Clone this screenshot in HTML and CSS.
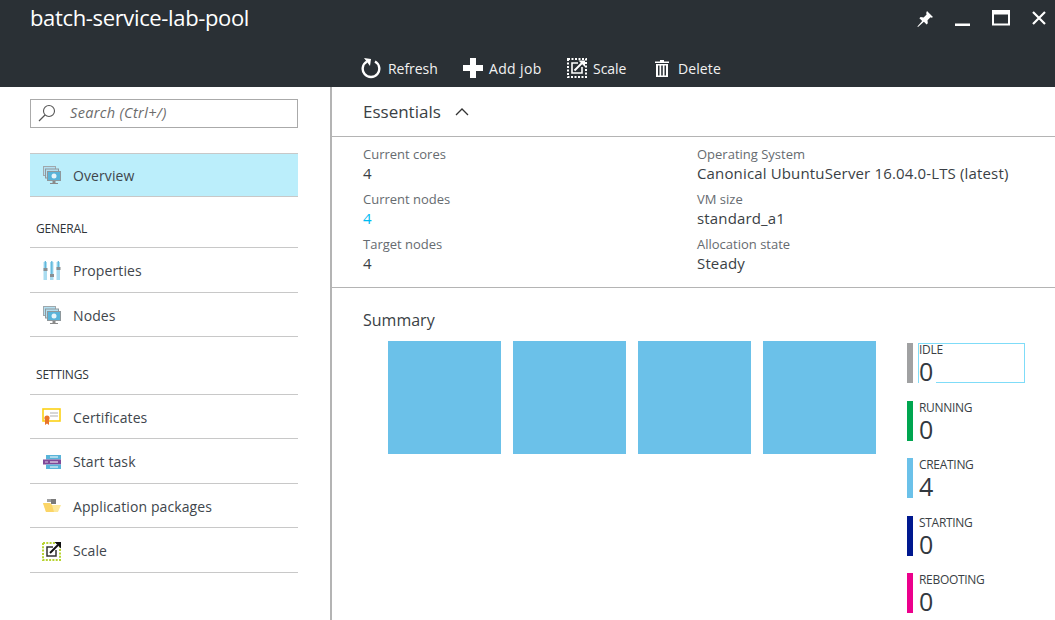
FILE: index.html
```html
<!DOCTYPE html>
<html lang="en">
<head>
  <meta charset="UTF-8" />
  <title>batch-service-lab-pool</title>
  <link rel="stylesheet" href="styles.css">
</head>
<body>
  <header class="blade-header">
    <div class="title-row">
      <h1>batch-service-lab-pool</h1>
      <div class="window-btns">
        <svg width="18" height="18" viewBox="0 0 18 18"><path d="M11 1l6 6-1.300 .8-1.200-.5-3 3 .3 3-1.200 1.200-2.700-2.800L2 17l-.6-.5 4.800-5.500-2.800-2.700 1.200-1.200 3 .3 3-3-.4-1.300z" fill="#fff"/></svg>
        <svg width="16" height="18" viewBox="0 0 16 18"><rect y="13.500" width="15" height="2.500" fill="#fff"/></svg>
        <svg width="18" height="16" viewBox="0 0 18 16"><path d="M0 0h18v15.500H0z M2 4.500v9h14v-9z" fill="#fff" fill-rule="evenodd"/></svg>
        <svg width="16" height="16" viewBox="0 0 16 16"><path d="M2 2l12 12M14 2L2 14" stroke="#fff" stroke-width="2.200" fill="none"/></svg>
      </div>
    </div>
    <div class="toolbar">
      <span class="cmd cmd-refresh">
        <svg width="20" height="22" viewBox="0 0 20 22"><path d="M6 4.500A8.300 8.300 0 1 0 14 4.500" stroke="#fff" stroke-width="2.400" fill="none"/><path d="M3 1l7 1-1 7z" fill="#fff"/></svg>
        Refresh
      </span>
      <span class="cmd cmd-add">
        <svg width="20" height="20" viewBox="0 0 20 20"><path d="M7 0h6v7h7v6h-7v7H7v-7H0V7h7z" fill="#fff"/></svg>
        Add job
      </span>
      <span class="cmd cmd-scale">
        <svg width="20" height="20" viewBox="0 0 20 20"><path d="M1 1h18v18H1z" stroke="#fff" stroke-width="2" stroke-dasharray="2 1.500" fill="none"/><path d="M11 5H5v10h10V9" stroke="#fff" stroke-width="1.600" fill="none"/><path d="M7.500 12.500L15 5" stroke="#fff" stroke-width="2" fill="none"/><path d="M11.500 2.500H18V9z" fill="#fff"/></svg>
        Scale
      </span>
      <span class="cmd cmd-delete">
        <svg width="14" height="17" viewBox="0 0 14 17"><path d="M5 0h4v1.500h5V3H0V1.500h5zM1 4h12v13H1zM3 5.500V15.500h1.500V5.500zM6.200 5.500V15.500h1.600V5.500zM9.500 5.500V15.500H11V5.500z" fill="#fff" fill-rule="evenodd"/></svg>
        Delete
      </span>
    </div>
  </header>

  <div class="blade-body">
    <aside class="sidebar">
      <div class="search">
        <svg width="18" height="18" viewBox="0 0 18 18"><circle cx="11" cy="7" r="5.500" stroke="#555" stroke-width="1.100" fill="none"/><path d="M7 11l-6 6" stroke="#555" stroke-width="1.200"/></svg>
        <span>Search (Ctrl+/)</span>
      </div>

      <a class="menu-item active">
        <svg class="menu-icon" width="20" height="20" viewBox="0 0 20 20"><use href="#ico-vm"/></svg>
        Overview
      </a>

      <div class="menu-group">GENERAL</div>
      <a class="menu-item">
        <svg class="menu-icon" width="20" height="20" viewBox="0 0 20 20">
          <path d="M1.500 1h3.500v18H1.500zM8 1h3.500v18H8zM14.500 1h3.500v18h-3.500z" fill="#a9dcf0"/>
          <path d="M2.700 0h1.200v8H2.700zM9.200 0h1.200v14H9.200zM15.700 0h1.200v8h-1.200z" fill="#59b4d9"/>
          <path d="M1.500 7h4v3h-4zM8 13h4v3H8zM14.500 6h4v3h-4z" fill="#8a8f92"/>
        </svg>
        Properties
      </a>
      <a class="menu-item">
        <svg class="menu-icon" width="20" height="20" viewBox="0 0 20 20"><use href="#ico-vm"/></svg>
        Nodes
      </a>

      <div class="menu-group group-settings">SETTINGS</div>
      <a class="menu-item">
        <svg class="menu-icon" width="20" height="20" viewBox="0 0 20 20">
          <rect x="1" y="2" width="17" height="12" fill="#fff" stroke="#fcd116" stroke-width="1.600"/>
          <path d="M8 6h8M8 9h8" stroke="#b0b0b0" stroke-width="1.200"/>
          <circle cx="5" cy="11" r="2.600" fill="#e8742c"/>
          <path d="M3 12h4v6l-2-1.500L3 18z" fill="#e8742c"/>
        </svg>
        Certificates
      </a>
      <a class="menu-item">
        <svg class="menu-icon" width="20" height="20" viewBox="0 0 20 20">
          <rect x="4" y="3" width="15" height="4.500" fill="#59b4d9"/>
          <rect x="1" y="7.500" width="18" height="5" fill="#804998"/>
          <rect x="4" y="12.500" width="15" height="4.500" fill="#59b4d9"/>
          <path d="M8 5h8M8 10h8M8 15h8" stroke="#fff" stroke-width="1"/>
          <path d="M3 10h3" stroke="#d9c6e3" stroke-width="1"/>
        </svg>
        Start task
      </a>
      <a class="menu-item">
        <svg class="menu-icon" width="20" height="20" viewBox="0 0 20 20">
          <path d="M5 3h7v3h-7z" fill="#a0a1a2"/>
          <path d="M9 3h5v5H9z" fill="#7a7a7a"/>
          <path d="M1 7h7l2 2h9l-3 7H4z" fill="#fde89a"/>
          <path d="M1 7h7l2 2 2 7H4z" fill="#fbd567"/>
        </svg>
        Application packages
      </a>
      <a class="menu-item">
        <svg class="menu-icon" width="20" height="20" viewBox="0 0 20 20">
          <path d="M1 2h17v17H1z" stroke="#b8d432" stroke-width="2" stroke-dasharray="2 1.300" fill="none"/>
          <path d="M11 6H5v9h9V9" stroke="#333" stroke-width="1.500" fill="none"/>
          <path d="M8 12l8-8" stroke="#111" stroke-width="2"/>
          <path d="M12.500 1H19v6.500z" fill="#111"/>
        </svg>
        Scale
      </a>
    </aside>

    <main class="content">
      <div class="essentials-head">
        <span>Essentials</span>
        <svg width="14" height="9" viewBox="0 0 14 9"><path d="M1 8l6-6 6 6" stroke="#333" stroke-width="1.300" fill="none"/></svg>
      </div>

      <div class="essentials">
        <div class="prop"><div class="prop-label">Current cores</div><div class="prop-value">4</div></div>
        <div class="prop"><div class="prop-label">Operating System</div><div class="prop-value">Canonical UbuntuServer 16.04.0-LTS (latest)</div></div>
        <div class="prop"><div class="prop-label">Current nodes</div><div class="prop-value link">4</div></div>
        <div class="prop"><div class="prop-label">VM size</div><div class="prop-value">standard_a1</div></div>
        <div class="prop"><div class="prop-label">Target nodes</div><div class="prop-value">4</div></div>
        <div class="prop"><div class="prop-label">Allocation state</div><div class="prop-value">Steady</div></div>
      </div>

      <section class="summary">
        <h2>Summary</h2>
        <div class="summary-row">
          <div class="tiles">
            <div class="tile"></div>
            <div class="tile"></div>
            <div class="tile"></div>
            <div class="tile"></div>
          </div>
          <div class="legend">
            <div class="legend-item">
              <span class="bar bar-idle"></span>
              <div class="legend-text focused"><div class="legend-name">IDLE</div><div class="legend-num">0</div></div>
            </div>
            <div class="legend-item">
              <span class="bar bar-running"></span>
              <div class="legend-text"><div class="legend-name">RUNNING</div><div class="legend-num">0</div></div>
            </div>
            <div class="legend-item">
              <span class="bar bar-creating"></span>
              <div class="legend-text"><div class="legend-name">CREATING</div><div class="legend-num">4</div></div>
            </div>
            <div class="legend-item">
              <span class="bar bar-starting"></span>
              <div class="legend-text"><div class="legend-name">STARTING</div><div class="legend-num">0</div></div>
            </div>
            <div class="legend-item">
              <span class="bar bar-rebooting"></span>
              <div class="legend-text"><div class="legend-name">REBOOTING</div><div class="legend-num">0</div></div>
            </div>
          </div>
        </div>
      </section>
    </main>
  </div>

  <svg width="0" height="0" class="defs">
    <defs>
      <g id="ico-vm">
        <rect x="1" y="1" width="13" height="10" fill="#a0a8ac"/>
        <rect x="2" y="2" width="11" height="8" fill="#b3e0f2"/>
        <rect x="3" y="3.500" width="14" height="10" fill="#8f989c"/>
        <rect x="4" y="4.500" width="12" height="8" fill="#b3e0f2"/>
        <rect x="5" y="6" width="14" height="10" fill="#8f989c"/>
        <rect x="6" y="7" width="12" height="8" fill="#59b4d9"/>
        <circle cx="12" cy="11" r="2.500" fill="#e6f5fb"/>
        <rect x="10.500" y="16" width="3" height="2" fill="#8a8a8a"/>
        <rect x="8" y="18" width="8" height="1" fill="#8a8a8a"/>
      </g>
    </defs>
  </svg>
</body>
</html>
```

FILE: styles.css
```css
html, body {
  margin: 0;
  height: 620px;
  overflow: hidden;
}
body {
  font-family: 'Open Sans', Arial, sans-serif;
  color: #3a3f45;
  background: #fff;
  font-size: 14px;
}
.defs {
  position: absolute;
}

/* header */
.blade-header {
  background: #2a3035;
  color: #fff;
  height: 87px;
}
.title-row {
  display: flex;
  justify-content: space-between;
  padding: 2px 8px 0 30px;
  height: 46px;
  box-sizing: border-box;
}
.title-row h1 {
  margin: 0;
  font-size: 22px;
  font-weight: 400;
  line-height: 30px;
  letter-spacing: -0.35px;
}
.window-btns {
  display: flex;
  align-items: flex-start;
  gap: 21px;
  padding-top: 8px;
}
.toolbar {
  display: flex;
  align-items: center;
  padding-left: 361px;
  padding-top: 3px;
  height: 41px;
  box-sizing: border-box;
}
.cmd {
  display: flex;
  align-items: center;
  gap: 7px;
  font-size: 14px;
  letter-spacing: -0.05px;
  color: #f2f2f2;
}
.cmd-refresh { width: 102px; }
.cmd-add { width: 104px; gap: 6px; letter-spacing: 0.35px; }
.cmd-scale { width: 88px; gap: 6px; }
.cmd-delete { gap: 9px; letter-spacing: 0.1px; }

/* layout */
.blade-body {
  display: flex;
  height: 533px;
}
.sidebar {
  width: 332px;
  box-sizing: border-box;
  border-right: 2px solid #b4b4b4;
  height: 533px;
  padding: 12px 0 0 30px;
  flex-shrink: 0;
}
.content {
  flex: 1;
  min-width: 0;
}

/* sidebar */
.search {
  display: flex;
  align-items: center;
  gap: 14px;
  height: 29px;
  box-sizing: border-box;
  border: 1px solid #aaa;
  padding: 0 0 2px 7px;
  font-size: 14.500px;
  font-style: italic;
  letter-spacing: 0.35px;
  color: #6b6b6b;
  margin-bottom: 25px;
  width: 268px;
}
.menu-item {
  display: flex;
  align-items: center;
  height: 44.500px;
  box-sizing: border-box;
  width: 268px;
  border-bottom: 1px solid #c8c8c8;
  padding: 2px 0 0 12px;
  color: #40464c;
  letter-spacing: 0.1px;
}
.menu-icon {
  margin-right: 11px;
  flex-shrink: 0;
}
.menu-item.active {
  background: #bbeefb;
  border-top: 1px solid #c8c8c8;
  padding-top: 0;
  height: 44px;
}
.menu-group {
  width: 268px;
  box-sizing: border-box;
  height: 51px;
  padding: 23px 0 0 6px;
  font-size: 12px;
  line-height: 17px;
  color: #2f3439;
  border-bottom: 1px solid #c8c8c8;
  letter-spacing: -0.2px;
}
.group-settings {
  height: 57.500px;
  padding-top: 29px;
}

/* essentials */
.essentials-head {
  height: 50px;
  box-sizing: border-box;
  border-bottom: 1px solid #b4b4b4;
  display: flex;
  align-items: center;
  gap: 14px;
  padding: 0 0 0 31px;
  font-size: 17px;
}
.essentials {
  display: grid;
  grid-template-columns: 334px 1fr;
  grid-auto-rows: 45px;
  padding: 8px 0 0 31px;
  height: 151px;
  box-sizing: border-box;
  border-bottom: 1px solid #b4b4b4;
}
.prop-label {
  font-size: 13px;
  line-height: 19px;
  color: #666b70;
}
.prop-value {
  font-size: 15px;
  line-height: 19px;
  color: #3a3f45;
  letter-spacing: 0.15px;
}
.prop-value.link {
  color: #00bcf2;
}

/* summary */
.summary {
  padding-left: 31px;
}
.summary h2 {
  margin: 0;
  padding-top: 21px;
  font-size: 16px;
  font-weight: 400;
  line-height: 23px;
  height: 53px;
  box-sizing: border-box;
}
.summary-row {
  display: flex;
  position: relative;
}
.tiles {
  display: flex;
  gap: 12px;
  padding-left: 25px;
  width: 544px;
  flex-shrink: 0;
  box-sizing: border-box;
}
.tile {
  width: 113px;
  height: 113px;
  background: #6bc1e9;
}
.legend {
  padding-top: 2px;
}
.legend-item {
  display: flex;
  height: 40px;
  margin-bottom: 17.500px;
}
.bar {
  width: 6px;
  height: 40px;
  flex-shrink: 0;
}
.bar-idle { background: #a0a1a2; }
.bar-running { background: #00a650; }
.bar-creating { background: #6bc1e9; }
.bar-starting { background: #00188f; }
.bar-rebooting { background: #ec008c; }
.legend-text {
  margin-left: 5px;
  width: 107px;
  height: 40px;
  box-sizing: border-box;
  border: 1px solid transparent;
}
.legend-text.focused {
  border-color: #7fdcf8;
}
.legend-name {
  font-size: 12px;
  line-height: 13px;
  margin-top: -1px;
  letter-spacing: -0.3px;
  color: #3a3f45;
}
.legend-num {
  font-size: 25px;
  line-height: 26px;
  height: 26px;
  width: 17px;
  margin-top: 2px;
  background: #fff;
  color: #32383e;
  position: relative;
}
```
